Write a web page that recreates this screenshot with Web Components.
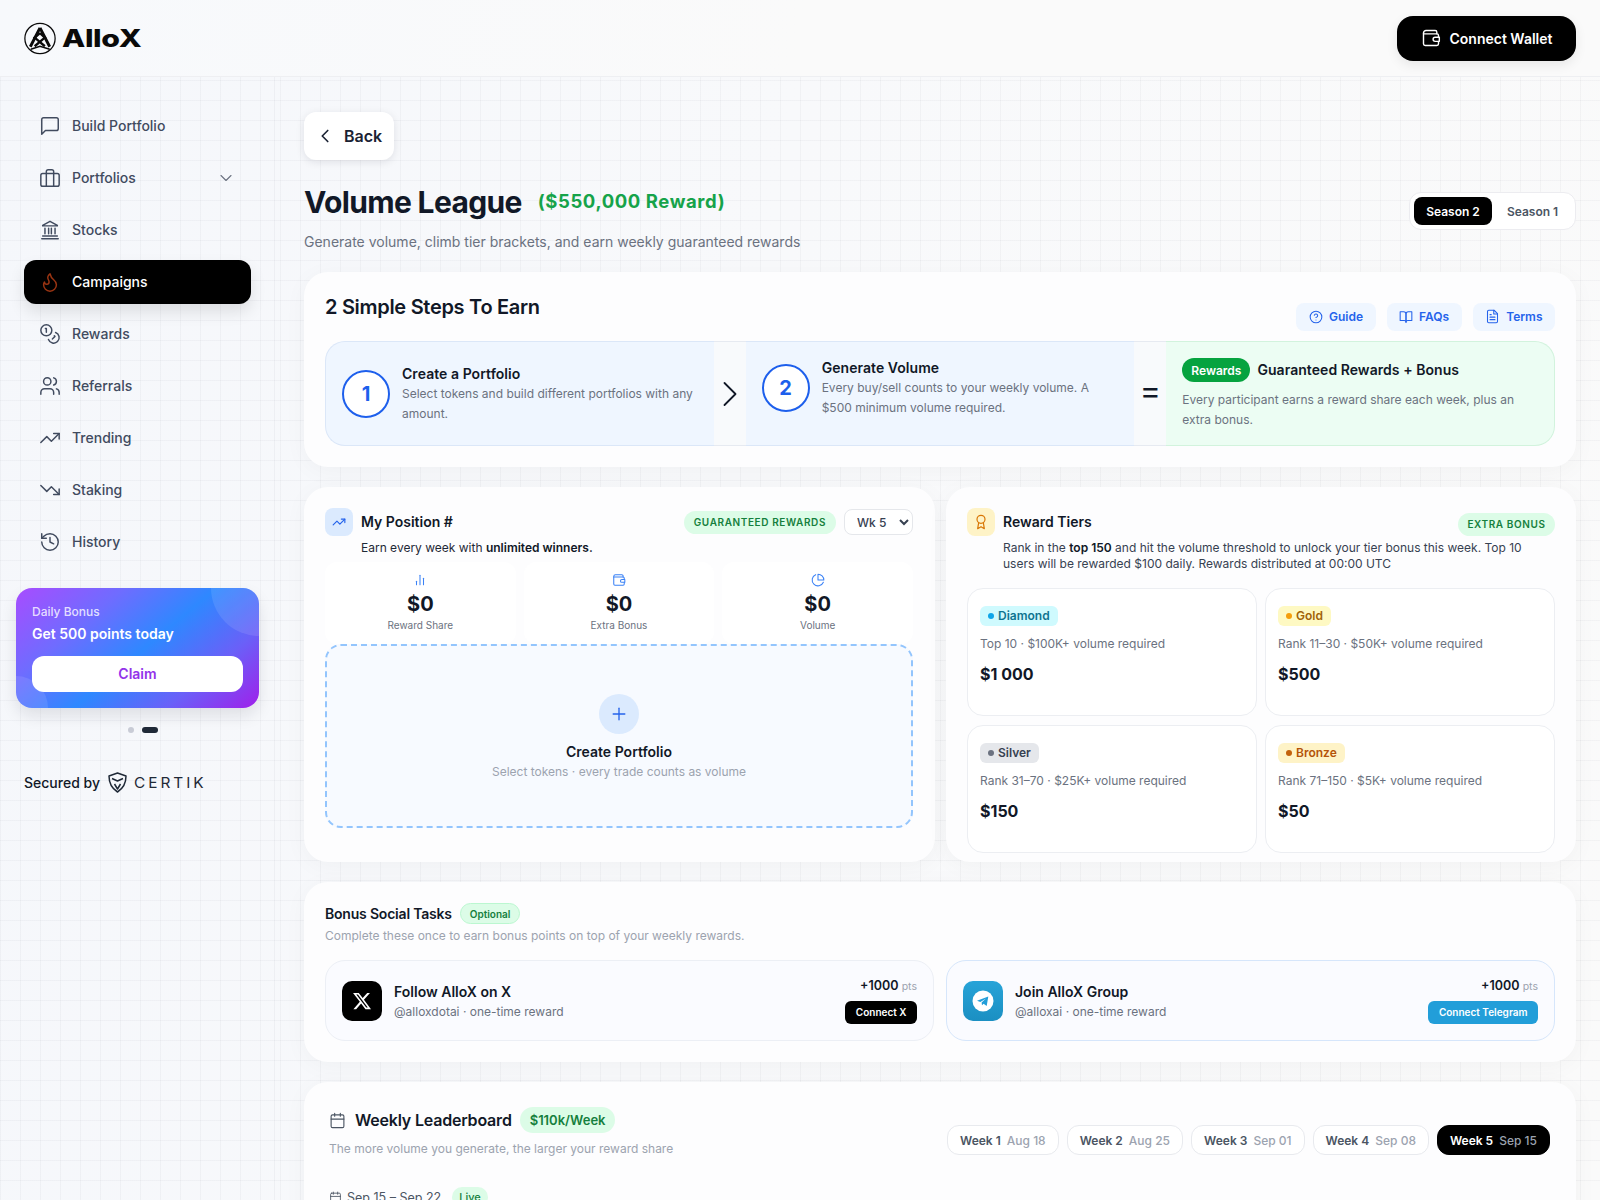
<!DOCTYPE html>
<html lang="en">
<head>
<meta charset="utf-8">
<title>AlloX Volume League</title>
<style>
  html, body { margin: 0; height: 1200px; overflow: hidden; }
  body { font-family: Inter, "Liberation Sans", sans-serif; color: #111827; }
</style>
</head>
<body>
<app-shell>
  <app-header slot="header"></app-header>
  <side-nav slot="side"></side-nav>
  <page-head></page-head>
  <steps-card></steps-card>
  <div style="display:grid;grid-template-columns:631px 630px;gap:11px;margin-top:20px">
    <position-card></position-card>
    <tiers-card></tiers-card>
  </div>
  <social-card></social-card>
  <leaderboard-card></leaderboard-card>
</app-shell>

<script>
const ICONS = {
  message: '<path d="M21 15a2 2 0 0 1-2 2H7l-4 4V5a2 2 0 0 1 2-2h14a2 2 0 0 1 2 2z"/>',
  luggage: '<rect x="2" y="7" width="20" height="14" rx="2"/><path d="M8 21V5a2 2 0 0 1 2-2h4a2 2 0 0 1 2 2v16"/>',
  bank: '<path d="M3 21.5h18M4 18.5h16M6.5 16v-6M10.5 16v-6M13.5 16v-6M17.5 16v-6M12 2.5 4 7v.5h16V7z"/>',
  flame: '<path d="M8.5 14.5A2.5 2.5 0 0 0 11 12c0-1.38-.5-2-1-3-1.072-2.143-.224-4.054 2-6 .5 2.5 2 4.9 4 6.5 2 1.6 3 3.5 3 5.5a7 7 0 1 1-14 0c0-1.153.433-2.294 1-3a2.5 2.5 0 0 0 2.5 2.5z"/>',
  coins: '<circle cx="8" cy="8" r="6"/><path d="M18.09 10.37A6 6 0 1 1 10.34 18"/><path d="M7 6h1v4"/><path d="m16.71 13.88.7.71-2.82 2.82"/>',
  users: '<path d="M16 21v-2a4 4 0 0 0-4-4H6a4 4 0 0 0-4 4v2"/><circle cx="9" cy="7" r="4"/><path d="M22 21v-2a4 4 0 0 0-3-3.87"/><path d="M16 3.13a4 4 0 0 1 0 7.75"/>',
  up: '<path d="m22 7-8.5 8.5-5-5L2 17"/><path d="M16 7h6v6"/>',
  down: '<path d="m22 17-8.5-8.5-5 5L2 7"/><path d="M16 17h6v-6"/>',
  history: '<path d="M3 12a9 9 0 1 0 9-9 9.75 9.75 0 0 0-6.74 2.74L3 8"/><path d="M3 3v5h5"/><path d="M12 7v5l4 2"/>',
  wallet: '<path d="M19 7V5a2 2 0 0 0-2-2H6a3 3 0 0 0-3 3v13a2 2 0 0 0 2 2h14a2 2 0 0 0 2-2v-3"/><path d="M3 7h16a2 2 0 0 1 2 2v2"/><path d="M17 11h5v5h-5a2.5 2.5 0 0 1 0-5z"/>',
  chevLeft: '<path d="m15 18-6-6 6-6"/>',
  chevRight: '<path d="m9 18 6-6-6-6"/>',
  chevDown: '<path d="m6 9 6 6 6-6"/>',
  help: '<circle cx="12" cy="12" r="10"/><path d="M9.09 9a3 3 0 0 1 5.83 1c0 2-3 3-3 3"/><path d="M12 17h.01"/>',
  book: '<path d="M2 3h6a4 4 0 0 1 4 4v14a3 3 0 0 0-3-3H2z"/><path d="M22 3h-6a4 4 0 0 0-4 4v14a3 3 0 0 1 3-3h7z"/>',
  file: '<path d="M14.5 2H6a2 2 0 0 0-2 2v16a2 2 0 0 0 2 2h12a2 2 0 0 0 2-2V7.5L14.5 2z"/><path d="M14 2v6h6"/><path d="M16 13H8"/><path d="M16 17H8"/><path d="M10 9H8"/>',
  bars: '<path d="M6 20v-6"/><path d="M12 20V4"/><path d="M18 20V9"/>',
  pie: '<path d="M21.21 15.89A10 10 0 1 1 8 2.83"/><path d="M22 12A10 10 0 0 0 12 2v10z"/>',
  award: '<circle cx="12" cy="8" r="6"/><path d="M15.477 12.89 17 22l-5-3-5 3 1.523-9.11"/>',
  plus: '<path d="M5 12h14"/><path d="M12 5v14"/>',
  calendar: '<rect x="3" y="4" width="18" height="18" rx="2"/><path d="M16 2v4"/><path d="M8 2v4"/><path d="M3 10h18"/>'
};

function icon(name, size = 20, sw = 2) {
  return `<svg width="${size}" height="${size}" viewBox="0 0 24 24" fill="none" stroke="currentColor" stroke-width="${sw}" stroke-linecap="round" stroke-linejoin="round" style="display:block;flex:none">${ICONS[name]}</svg>`;
}

class BaseElement extends HTMLElement {
  constructor() {
    super();
    this.attachShadow({ mode: "open" });
  }

  connectedCallback() {
    const template = document.createElement("template");
    template.innerHTML = `<style>${this.getStyles()}</style>${this.getMarkup()}`;
    this.shadowRoot.appendChild(template.content.cloneNode(true));
  }
}

class AppShell extends BaseElement {
  getStyles() {
    return `
      :host { display: block; height: 1200px; overflow: hidden; background: linear-gradient(100deg, #f5f7fb 0%, #f8f9fb 45%, #fafafa 100%); }
      .body {
        display: grid; grid-template-columns: 275px 1fr; height: 1123px;
        background-image: linear-gradient(rgba(15,23,42,.03) 1px, transparent 1px), linear-gradient(90deg, rgba(15,23,42,.03) 1px, transparent 1px);
        background-size: 20px 20px; background-position: 0 -17px;
      }
      aside { border-right: 1px solid rgba(15,23,42,.04); }
      main { padding: 35px 24px 0 29px; min-width: 0; }
    `;
  }
  getMarkup() {
    return `<slot name="header"></slot>
      <div class="body"><aside><slot name="side"></slot></aside><main><slot></slot></main></div>`;
  }
}

class AppHeader extends BaseElement {
  getStyles() {
    return `
      :host { display: flex; align-items: center; justify-content: space-between; height: 77px; box-sizing: border-box; padding: 0 24px; border-bottom: 1px solid #eeeff2; background: linear-gradient(100deg, #f7f9fc, #fafafa 50%); }
      .logo { display: flex; align-items: center; gap: 6px; margin-top: 1px; }
      .word { display: inline-block; font: 800 24px/1 Inter, sans-serif; color: #0a0a0a; transform: scaleX(1.26); transform-origin: left; width: 80px; letter-spacing: -.3px; }
      button { display: flex; align-items: center; gap: 9px; height: 45px; width: 179px; padding: 0; justify-content: center; border: 0; border-radius: 16px; background: #000; color: #fff; font: 600 14px Inter, sans-serif; box-shadow: 0 4px 12px rgba(0,0,0,.08); }
    `;
  }
  getMarkup() {
    return `
      <div class="logo">
        <svg width="32" height="33" viewBox="0 0 33 33" fill="none" stroke="#0a0a0a">
          <circle cx="16.5" cy="16.5" r="15.6" stroke-width="1.3"/>
          <path d="M16.5 5.5 6.5 25M16.5 5.5l10 19.5" stroke-width="3"/>
          <path d="M16.5 11 11 15.5l10.5 9M16.5 11l5 4.5-10.5 9" stroke-width="2.4"/>
          <path d="M7 27.5l9.5-3 10 3" stroke-width="1.6"/>
        </svg>
        <span class="word">AlloX</span>
      </div>
      <button>${icon("wallet", 20, 1.7)}Connect Wallet</button>
    `;
  }
}

class NavItem extends BaseElement {
  getStyles() {
    return `
      :host { display: flex; align-items: center; height: 44px; padding: 0 15px; border-radius: 12px; font: 500 14px Inter, sans-serif; color: #414b5f; gap: 11px; }
      :host([active]) { background: #000; color: #fff; box-shadow: 0 8px 16px rgba(0,0,0,.1); }
      :host([active]) .ic { color: #9a3412; }
      .ic { color: #414b5f; }
      .label { padding-bottom: 2px; }
      .chev { margin-left: auto; color: #6b7280; }
    `;
  }
  getMarkup() {
    const chev = this.hasAttribute("chevron") ? `<span class="chev">${icon("chevDown", 20, 1.3)}</span>` : "";
    return `<span class="ic">${icon(this.getAttribute("icon"), 22, 1.6)}</span><span class="label">${this.getAttribute("label")}</span>${chev}`;
  }
}

class BonusCard extends BaseElement {
  getStyles() {
    return `
      :host { display: block; position: relative; overflow: hidden; box-sizing: border-box; height: 120px; padding: 16px; border-radius: 16px; color: #fff; background: linear-gradient(140deg, #a84cff 0%, #6f6cff 28%, #2e88ff 52%, #6a60f8 76%, #a020ea 100%); box-shadow: 0 8px 16px rgba(15,23,42,.1); }
      .blob { position: absolute; border-radius: 50%; background: rgba(255,255,255,.1); }
      .a { width: 96px; height: 96px; right: -48px; top: -48px; }
      .b { width: 64px; height: 64px; left: -32px; bottom: -32px; }
      .small { position: relative; font-size: 12px; line-height: 16px; font-weight: 500; color: rgba(255,255,255,.8); }
      .big { position: relative; margin-top: 4px; font-size: 14px; line-height: 20px; font-weight: 600; }
      button { position: relative; display: block; width: 100%; height: 36px; margin-top: 12px; padding: 0 0 2px; border: 0; border-radius: 12px; background: #fff; color: #9333ea; font: 600 14px Inter, sans-serif; }
    `;
  }
  getMarkup() {
    return `<i class="blob a"></i><i class="blob b"></i>
      <div class="small">Daily Bonus</div>
      <div class="big">Get 500 points today</div>
      <button>Claim</button>`;
  }
}

class SideNav extends BaseElement {
  getStyles() {
    return `
      :host { display: block; padding: 27px 23px 0 24px; }
      nav { display: flex; flex-direction: column; gap: 8px; }
      .promo { margin: 24px -8px 0; }
      .dots { display: flex; justify-content: center; gap: 8px; margin-top: 19px; padding-left: 11px; }
      .dots i { width: 6px; height: 6px; border-radius: 3px; background: #c9ccd6; }
      .dots i.on { width: 16px; background: #1f2937; }
      .secured { display: flex; align-items: center; margin-top: 39px; font: 500 14px Inter, sans-serif; color: #111827; }
      .mark { margin: 0 7px 0 8px; }
      .certik { display: inline-block; font: 400 14px/1 Inter, sans-serif; letter-spacing: 2.7px; color: #1f2937; transform: scaleX(1.1); transform-origin: left; }
    `;
  }
  getMarkup() {
    const items = [
      ["message", "Build Portfolio"], ["luggage", "Portfolios", "chevron"], ["bank", "Stocks"],
      ["flame", "Campaigns", "active"], ["coins", "Rewards"], ["users", "Referrals"],
      ["up", "Trending"], ["down", "Staking"], ["history", "History"]
    ];
    return `
      <nav>${items.map(([ic, label, flag]) => `<nav-item icon="${ic}" label="${label}" ${flag || ""}></nav-item>`).join("")}</nav>
      <div class="promo"><bonus-card></bonus-card></div>
      <div class="dots"><i></i><i class="on"></i></div>
      <div class="secured">Secured by
        <svg class="mark" width="19" height="21" viewBox="0 0 19 21" fill="none" stroke="#1f2937" stroke-width="1.5" stroke-linejoin="round"><path d="M9.5 1 18 4C18 11.5 15 16.5 9.5 20 4 16.5 1 11.5 1 4z"/><path d="M4 6.5 9.5 9 15 6.5M6.5 12l3 5 3-5"/></svg>
        <span class="certik">CERTIK</span>
      </div>`;
  }
}

class PageHead extends BaseElement {
  getStyles() {
    return `
      :host { display: block; position: relative; height: 160px; }
      .back { display: flex; align-items: center; gap: 8px; width: 90px; height: 48px; box-sizing: border-box; padding-left: 10px; background: #fff; border-radius: 12px; font: 600 16px Inter, sans-serif; color: #1a2233; box-shadow: 0 2px 8px rgba(15,23,42,.1); }
      .row { display: flex; justify-content: space-between; margin-top: 21px; }
      .title { display: flex; align-items: center; gap: 16px; height: 42px; }
      h1 { margin: 0; font: 700 30px/42px Inter, sans-serif; letter-spacing: -.65px; color: #111827; }
      .reward { font: 700 18.5px Inter, sans-serif; letter-spacing: .6px; color: #16a34a; margin-top: -3px; }
      p { margin: 9px 0 0; font: 400 14px/20px Inter, sans-serif; color: #6b7280; }
      .toggle { display: flex; box-sizing: border-box; align-self: flex-start; margin-top: 11px; width: 167px; height: 38px; padding: 4px; border: 1px solid #ececf0; border-radius: 12px; background: #fff; font: 600 12px Inter, sans-serif; color: #4b5563; }
      .toggle span { display: flex; align-items: center; justify-content: center; height: 28px; flex: 1; border-radius: 8px; padding-left: 2px; }
      .toggle .on { flex: none; width: 78px; padding: 0; background: #000; color: #fff; }
    `;
  }
  getMarkup() {
    return `
      <div class="back">${icon("chevLeft", 22, 1.8)}Back</div>
      <div class="row">
        <div>
          <div class="title"><h1>Volume League</h1><span class="reward">($550,000 Reward)</span></div>
          <p>Generate volume, climb tier brackets, and earn weekly guaranteed rewards</p>
        </div>
        <div class="toggle"><span class="on">Season 2</span><span>Season 1</span></div>
      </div>`;
  }
}

const CARD = "background: #fdfdfe; border-radius: 24px; box-shadow: 0 4px 24px rgba(15,23,42,.035);";

class StepsCard extends BaseElement {
  getStyles() {
    return `
      :host { display: block; box-sizing: border-box; height: 195px; padding: 21px; ${CARD} }
      .top { display: flex; justify-content: space-between; height: 48px; }
      h2 { margin: 0; font: 600 20px/28px Inter, sans-serif; letter-spacing: -.3px; color: #111827; }
      .links { display: flex; gap: 11px; margin-top: 10px; }
      .links span { display: flex; align-items: center; gap: 6px; height: 28px; box-sizing: border-box; padding: 0 12.5px 1px; border-radius: 8px; background: #eff6ff; color: #2563eb; font: 600 12px Inter, sans-serif; }
      .flow { display: grid; grid-template-columns: 1fr 32px 1fr 32px 1fr; height: 105px; }
      .step { display: flex; align-items: center; gap: 12px; box-sizing: border-box; padding: 0 16px; background: #eff6ff; min-width: 0; border: 1px solid #dbe7f8; border-width: 1px 0; }
      .one { border-left-width: 1px; border-radius: 20px 0 0 20px; }
      .two { padding-bottom: 12px; }
      .num { display: flex; align-items: center; justify-content: center; flex: none; width: 48px; height: 48px; box-sizing: border-box; border: 2px solid #1d5fec; border-radius: 50%; background: #fff; color: #1d5fec; font: 700 20px Inter, sans-serif; }
      .name { font: 600 14px/20px Inter, sans-serif; letter-spacing: .05px; color: #111827; }
      .desc { font: 400 12px/20px Inter, sans-serif; color: #6b7280; }
      .join { display: flex; align-items: center; justify-content: center; box-sizing: border-box; padding-left: 1px; background: #f8fafc; color: #111827; border: 1px solid #e6eaf1; border-width: 1px 0; }
      .eq { font: 400 32px/1 Inter, sans-serif; padding: 0 0 5px; }
      .green { box-sizing: border-box; background: #ecfdf3; padding: 16px 16px 0; border: 1px solid #d2f3dd; border-left: 0; border-radius: 0 20px 20px 0; }
      .ghead { display: flex; align-items: center; gap: 7px; height: 24px; margin-bottom: 8px; }
      .pill { display: flex; align-items: center; height: 24px; padding: 0 9px; border-radius: 12px; background: #06a33f; color: #fff; font: 600 12px Inter, sans-serif; }
    `;
  }
  getMarkup() {
    return `
      <div class="top">
        <h2>2 Simple Steps To Earn</h2>
        <div class="links">
          <span>${icon("help", 14, 1.8)}Guide</span>
          <span>${icon("book", 14, 1.8)}FAQs</span>
          <span>${icon("file", 15, 1.7)}Terms</span>
        </div>
      </div>
      <div class="flow">
        <div class="step one">
          <div class="num">1</div>
          <div><div class="name">Create a Portfolio</div><div class="desc">Select tokens and build different portfolios with any amount.</div></div>
        </div>
        <div class="join">${icon("chevRight", 44, 1)}</div>
        <div class="step two">
          <div class="num">2</div>
          <div><div class="name">Generate Volume</div><div class="desc">Every buy/sell counts to your weekly volume. A $500 minimum volume required.</div></div>
        </div>
        <div class="join eq">=</div>
        <div class="green">
          <div class="ghead"><span class="pill">Rewards</span><span class="name">Guaranteed Rewards + Bonus</span></div>
          <div class="desc">Every participant earns a reward share each week, plus an extra bonus.</div>
        </div>
      </div>`;
  }
}

class StatBox extends BaseElement {
  getStyles() {
    return `
      :host { display: flex; flex-direction: column; align-items: center; height: 82px; background: #fff; border-radius: 12px; color: #3b82f6; }
      .ic { margin-top: 11px; height: 16px; }
      .val { margin-top: 1px; font: 700 20px/28px Inter, sans-serif; color: #111827; }
      .lab { margin-top: 0; font: 400 10px/14px Inter, sans-serif; color: #6b7280; }
    `;
  }
  getMarkup() {
    return `<div class="ic">${icon(this.getAttribute("icon"), 14, 1.8)}</div>
      <div class="val">${this.getAttribute("value")}</div>
      <div class="lab">${this.getAttribute("label")}</div>`;
  }
}

class PositionCard extends BaseElement {
  getStyles() {
    return `
      :host { display: block; box-sizing: border-box; height: 375px; padding: 21px 22px 0 21px; ${CARD} }
      .head { display: flex; align-items: center; gap: 8px; height: 28px; }
      .sq { display: flex; align-items: center; justify-content: center; width: 28px; height: 28px; border-radius: 8px; background: #dbeafe; color: #2563eb; }
      h3 { margin: 0 0 2px; font: 600 14px Inter, sans-serif; color: #111827; flex: 1; }
      .badge { display: flex; align-items: center; height: 23px; padding: 0 10px; border-radius: 12px; background: #dcfce7; color: #15803d; font: 600 10px Inter, sans-serif; letter-spacing: .6px; }
      select { width: 69px; height: 26px; padding: 0 4px 0 8px; border: 1px solid #e5e7eb; border-radius: 8px; background: #fff; color: #374151; font: 500 12px Inter, sans-serif; }
      .sub { margin: 2px 0 0 36px; font: 400 12px/20px Inter, sans-serif; color: #1f2937; }
      b { font-weight: 600; color: #111827; }
      .stats { display: grid; grid-template-columns: repeat(3, 1fr); gap: 8px; margin-top: 4px; }
      .create { display: flex; flex-direction: column; align-items: center; box-sizing: border-box; height: 184px; border: 2px dashed #93c5fd; border-radius: 16px; background: #f7faff; }
      .plus { display: flex; align-items: center; justify-content: center; width: 40px; height: 40px; margin-top: 48px; border-radius: 50%; background: #dbeafe; color: #2563eb; }
      .t { margin-top: 8px; font: 600 14px/20px Inter, sans-serif; color: #111827; }
      .s { font: 400 12px/20px Inter, sans-serif; color: #9ca3af; }
    `;
  }
  getMarkup() {
    return `
      <div class="head">
        <div class="sq">${icon("up", 14, 2)}</div>
        <h3>My Position #</h3>
        <span class="badge">GUARANTEED REWARDS</span>
        <select><option>Wk 5</option></select>
      </div>
      <div class="sub">Earn every week with <b>unlimited winners.</b></div>
      <div class="stats">
        <stat-box icon="bars" value="$0" label="Reward Share"></stat-box>
        <stat-box icon="wallet" value="$0" label="Extra Bonus"></stat-box>
        <stat-box icon="pie" value="$0" label="Volume"></stat-box>
      </div>
      <div class="create">
        <div class="plus">${icon("plus", 20, 1.6)}</div>
        <div class="t">Create Portfolio</div>
        <div class="s">Select tokens · every trade counts as volume</div>
      </div>`;
  }
}

class TierCard extends BaseElement {
  getStyles() {
    const bg = this.getAttribute("bg"), fg = this.getAttribute("fg"), dot = this.getAttribute("dot");
    return `
      :host { display: block; box-sizing: border-box; height: 128px; padding: 17px 12px 0; border: 1px solid #eceef2; border-radius: 16px; background: #fff; }
      .pill { display: flex; width: fit-content; box-sizing: border-box; align-items: center; gap: 4px; height: 20px; padding: 0 8px 1px; border-radius: 6px; background: ${bg}; color: ${fg}; font: 600 12px Inter, sans-serif; }
      i { width: 6px; height: 6px; border-radius: 50%; background: ${dot}; }
      .req { margin-top: 8px; font: 400 12px/20px Inter, sans-serif; color: #6b7280; }
      .val { margin-top: 8px; font: 700 16px/24px Inter, sans-serif; color: #111827; }
    `;
  }
  getMarkup() {
    return `<div class="pill"><i></i>${this.getAttribute("name")}</div>
      <div class="req">${this.getAttribute("req")}</div>
      <div class="val">${this.getAttribute("value")}</div>`;
  }
}

class TiersCard extends BaseElement {
  getStyles() {
    return `
      :host { display: block; box-sizing: border-box; height: 375px; padding: 21px; ${CARD} }
      .head { display: flex; gap: 8px; height: 28px; }
      .sq { display: flex; align-items: center; justify-content: center; width: 28px; height: 28px; border-radius: 8px; background: #fef3c7; color: #d97706; }
      h3 { margin: 0; font: 600 14px/28px Inter, sans-serif; color: #111827; flex: 1; }
      .badge { display: flex; align-items: center; box-sizing: border-box; height: 23px; margin-top: 5px; padding: 0 9.5px 1px; border-radius: 12px; background: #dcfce7; color: #15803d; font: 600 10px Inter, sans-serif; letter-spacing: .6px; }
      .sub { margin: 4px 0 0 36px; font: 400 12px/16px Inter, sans-serif; color: #374151; }
      b { font-weight: 600; color: #111827; }
      .grid { display: grid; grid-template-columns: 1fr 1fr; gap: 9px 8px; margin-top: 16px; }
    `;
  }
  getMarkup() {
    return `
      <div class="head">
        <div class="sq">${icon("award", 16, 1.8)}</div>
        <h3>Reward Tiers</h3>
        <span class="badge">EXTRA BONUS</span>
      </div>
      <div class="sub">Rank in the <b>top 150</b> and hit the volume threshold to unlock your tier bonus this week. Top 10 users will be rewarded $100 daily. Rewards distributed at 00:00 UTC</div>
      <div class="grid">
        <tier-card name="Diamond" bg="#cffafe" fg="#0e7490" dot="#0ea5e9" req="Top 10 · $100K+ volume required" value="$1 000"></tier-card>
        <tier-card name="Gold" bg="#fef9c3" fg="#a16207" dot="#f59e0b" req="Rank 11–30 · $50K+ volume required" value="$500"></tier-card>
        <tier-card name="Silver" bg="#e5e7eb" fg="#374151" dot="#6b7280" req="Rank 31–70 · $25K+ volume required" value="$150"></tier-card>
        <tier-card name="Bronze" bg="#fef3c7" fg="#b45309" dot="#c2610c" req="Rank 71–150 · $5K+ volume required" value="$50"></tier-card>
      </div>`;
  }
}

class TaskRow extends BaseElement {
  getStyles() {
    return `
      :host { display: flex; align-items: center; gap: 12px; box-sizing: border-box; height: 81px; padding: 0 16px; border: 1px solid #eceff5; border-radius: 20px; background: #fafbff; }
      :host([tg]) { border-color: #d6e6fb; }
      .logo { display: flex; align-items: center; justify-content: center; flex: none; width: 40px; height: 40px; border-radius: 10px; background: #000; }
      :host([tg]) .logo { background: linear-gradient(180deg, #27a3d8, #1b8fc2); }
      .txt { flex: 1; min-width: 0; padding-top: 2px; }
      .t { font: 600 14px/20px Inter, sans-serif; color: #111827; }
      .s { font: 400 12px/18px Inter, sans-serif; color: #6b7280; margin-top: 1px; }
      .right { display: flex; flex-direction: column; align-items: flex-end; gap: 7px; }
      .pts { font: 600 12.5px/16px Inter, sans-serif; color: #111827; }
      .pts small { font: 400 10.5px Inter, sans-serif; color: #9ca3af; }
      .btn { display: flex; align-items: center; box-sizing: border-box; height: 23px; padding: 0 10.5px 1px; border-radius: 6px; background: #000; color: #fff; font: 600 10px Inter, sans-serif; }
      :host([tg]) .btn { background: #229ed9; }
    `;
  }
  getMarkup() {
    const logo = this.hasAttribute("tg")
      ? `<svg width="22" height="22" viewBox="0 0 22 22"><circle cx="11" cy="11" r="10.5" fill="#fff"/><path d="M5 10.8 16.3 6.4 14.7 16 11.6 13.7 10 15.3 9.6 12.4 14 8.6 8.4 12z" fill="#229ed9"/></svg>`
      : `<svg width="20" height="20" viewBox="0 0 24 24" fill="#fff"><path d="M18.244 2.25h3.308l-7.227 8.26 8.502 11.24H16.17l-5.214-6.817L4.99 21.75H1.68l7.73-8.835L1.254 2.25H8.08l4.713 6.231zm-1.161 17.52h1.833L7.084 4.126H5.117z"/></svg>`;
    return `<div class="logo">${logo}</div>
      <div class="txt"><div class="t">${this.getAttribute("name")}</div><div class="s">${this.getAttribute("sub")}</div></div>
      <div class="right"><div class="pts">+1000 <small>pts</small></div><div class="btn">${this.getAttribute("action")}</div></div>`;
  }
}

class SocialCard extends BaseElement {
  getStyles() {
    return `
      :host { display: block; box-sizing: border-box; height: 180px; margin-top: 20px; padding: 21px; ${CARD} }
      .head { display: flex; align-items: center; gap: 8px; height: 21px; }
      h3 { margin: 0; font: 600 14px Inter, sans-serif; letter-spacing: -.2px; color: #111827; }
      .pill { display: flex; align-items: center; height: 21px; padding: 0 9px; box-sizing: border-box; border: 1px solid #bbf7d0; border-radius: 11px; background: #dcfce7; color: #15803d; font: 600 10px Inter, sans-serif; }
      p { margin: 2px 0 14px; font: 400 12px/20px Inter, sans-serif; color: #9ca3af; }
      .rows { display: grid; grid-template-columns: 1fr 1fr; gap: 12px; }
    `;
  }
  getMarkup() {
    return `
      <div class="head"><h3>Bonus Social Tasks</h3><span class="pill">Optional</span></div>
      <p>Complete these once to earn bonus points on top of your weekly rewards.</p>
      <div class="rows">
        <task-row name="Follow AlloX on X" sub="@alloxdotai · one-time reward" action="Connect X"></task-row>
        <task-row tg name="Join AlloX Group" sub="@alloxai · one-time reward" action="Connect Telegram"></task-row>
      </div>`;
  }
}

class LeaderboardCard extends BaseElement {
  getStyles() {
    return `
      :host { display: block; box-sizing: border-box; height: 300px; margin-top: 20px; padding: 25px 26px 0 25px; ${CARD} }
      .top { display: flex; justify-content: space-between; }
      .head { display: flex; align-items: center; gap: 8px; height: 26px; color: #4b5563; }
      .head svg { margin-right: 1px; }
      h3 { margin: 0; font: 600 16px Inter, sans-serif; letter-spacing: -.2px; color: #111827; }
      .pill { display: flex; align-items: center; height: 26px; padding: 0 10px; border-radius: 13px; background: #dcfce7; color: #15803d; font: 600 13px Inter, sans-serif; }
      p { margin: 6px 0 0; font: 400 12px/20px Inter, sans-serif; color: #9ca3af; }
      .weeks { display: flex; gap: 8px; margin-top: 18px; }
      .wk { display: flex; align-items: center; gap: 6px; height: 30px; box-sizing: border-box; padding: 0 12px; border: 1px solid #e8eaee; border-radius: 12px; background: #fff; font: 600 12px Inter, sans-serif; color: #4b5563; }
      .wk em { font: 500 12px Inter, sans-serif; color: #9ca3af; }
      .wk.on { background: #000; border-color: #000; color: #fff; }
      .date { display: flex; align-items: center; gap: 5px; margin-top: 28px; font: 400 12.5px Inter, sans-serif; color: #4b5563; }
      .live { display: flex; align-items: center; height: 20px; margin-left: 6px; padding: 0 7px; border-radius: 10px; background: #dcfce7; color: #15803d; font: 500 11px Inter, sans-serif; }
    `;
  }
  getMarkup() {
    const weeks = [["Week 1", "Aug 18"], ["Week 2", "Aug 25"], ["Week 3", "Sep 01"], ["Week 4", "Sep 08"], ["Week 5", "Sep 15", "on"]];
    return `
      <div class="top">
        <div>
          <div class="head">${icon("calendar", 17, 1.6)}<h3>Weekly Leaderboard</h3><span class="pill">$110k/Week</span></div>
          <p>The more volume you generate, the larger your reward share</p>
        </div>
        <div class="weeks">${weeks.map(([w, d, on]) => `<span class="wk ${on || ""}">${w}<em>${d}</em></span>`).join("")}</div>
      </div>
      <div class="date">${icon("calendar", 13, 1.6)}Sep 15 – Sep 22<span class="live">Live</span></div>`;
  }
}

customElements.define("nav-item", NavItem);
customElements.define("bonus-card", BonusCard);
customElements.define("side-nav", SideNav);
customElements.define("app-header", AppHeader);
customElements.define("page-head", PageHead);
customElements.define("steps-card", StepsCard);
customElements.define("stat-box", StatBox);
customElements.define("position-card", PositionCard);
customElements.define("tier-card", TierCard);
customElements.define("tiers-card", TiersCard);
customElements.define("task-row", TaskRow);
customElements.define("social-card", SocialCard);
customElements.define("leaderboard-card", LeaderboardCard);
customElements.define("app-shell", AppShell);
</script>
</body>
</html>
